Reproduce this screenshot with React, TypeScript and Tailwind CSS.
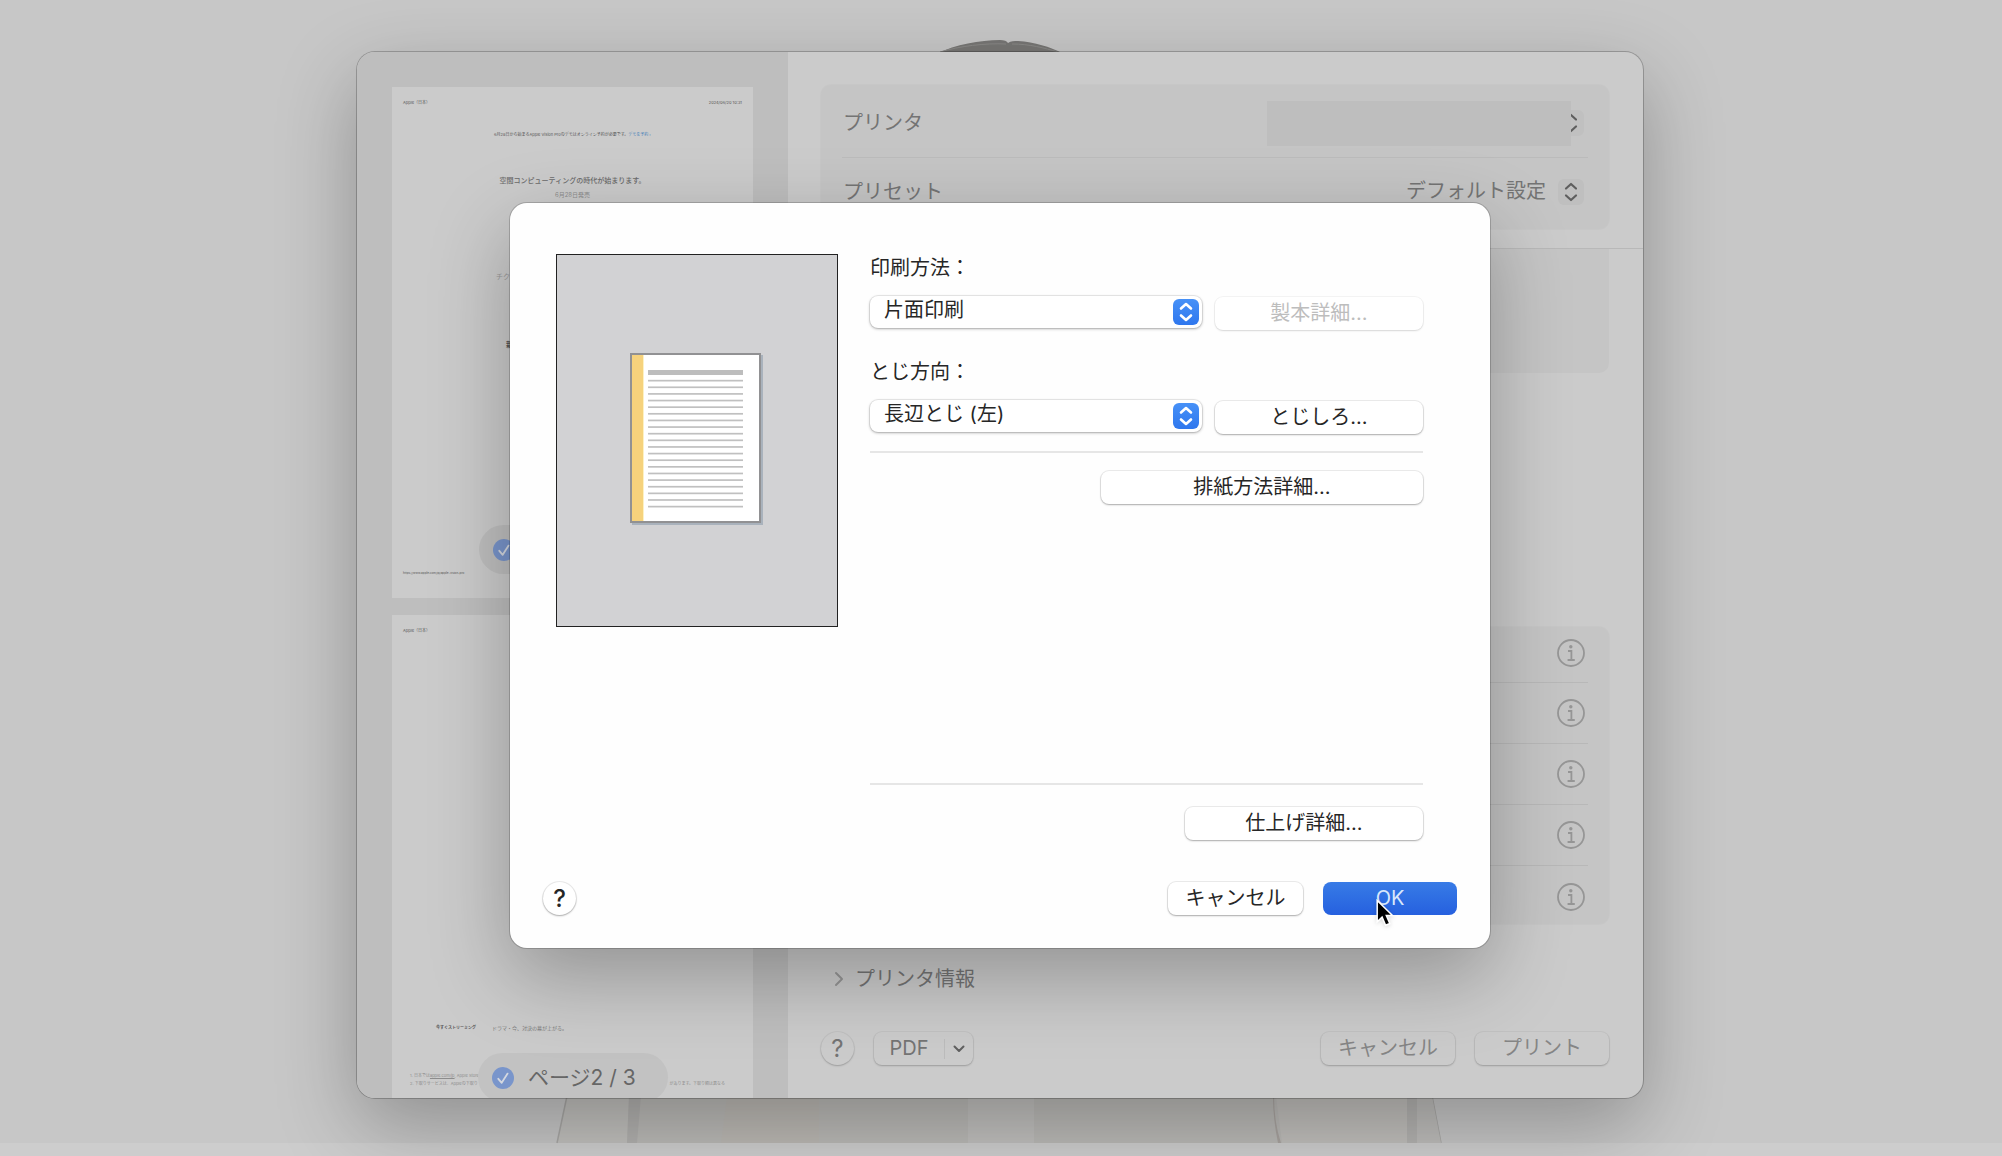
import React, { useState } from 'react';

const lineRows = Array.from({ length: 20 }, (_, i) => i);
const optionRows = ['メディアと品質', 'レイアウト', '用紙処理', '透かし', 'プリンタ機能'];

const UpDown: React.FC<{ className?: string; width?: number }> = ({ className, width = 3 }) => (
  <svg viewBox="0 0 26 26" className={className} fill="none" stroke="currentColor" strokeWidth={width} strokeLinecap="round" strokeLinejoin="round" aria-hidden="true">
    <path d="M8 9.5L13 5l5 4.5M8 16.5l5 4.5 5-4.5" />
  </svg>
);

const CheckBadge: React.FC = () => (
  <svg viewBox="0 0 22 22" className="size-[22px] shrink-0" fill="none" aria-hidden="true">
    <circle cx="11" cy="11" r="11" fill="#7995cb" />
    <path d="M6.3 11.8l3.4 4L15.6 6.6" stroke="#d4d8e0" strokeWidth="1.8" strokeLinecap="round" strokeLinejoin="round" />
  </svg>
);

const InfoIcon: React.FC = () => (
  <svg viewBox="0 0 28 28" className="size-7" fill="none" stroke="#969696" aria-hidden="true">
    <circle cx="14" cy="14" r="13" strokeWidth="1.8" />
    <circle cx="13.8" cy="7.7" r="1.7" fill="#969696" stroke="none" />
    <path d="M11 12h3.4v9M10.6 21h7.2" strokeWidth="1.8" />
  </svg>
);

const PushButton: React.FC<React.ButtonHTMLAttributes<HTMLButtonElement>> = ({ className = '', ...rest }) => (
  <button
    type="button"
    className={`flex h-[33px] items-center justify-center rounded-lg bg-white pb-0.5 text-[20px] leading-7 text-[#262626] shadow-[0_0_0_1px_rgba(0,0,0,0.07),0_1px_2px_rgba(0,0,0,0.28)] disabled:text-[#bdbdbd] disabled:shadow-[0_0_0_1px_rgba(0,0,0,0.04),0_1px_2px_rgba(0,0,0,0.12)] ${className}`}
    {...rest}
  />
);

const DimButton: React.FC<React.ButtonHTMLAttributes<HTMLButtonElement>> = ({ className = '', ...rest }) => (
  <button
    type="button"
    className={`flex h-[33px] items-center justify-center rounded-lg pb-0.5 text-[20px] leading-7 shadow-[0_0_0_1px_rgba(0,0,0,0.04),0_1px_2px_rgba(0,0,0,0.2)] ${className}`}
    {...rest}
  />
);

interface PopupProps {
  id: string;
  label: string;
  options: string[];
  value: string;
  onChange: (v: string) => void;
  children: React.ReactNode;
}

const PopupField: React.FC<PopupProps> = ({ id, label, options, value, onChange, children }) => (
  <div className="flex flex-col gap-3.5">
    <label htmlFor={id} className="text-[20px] leading-7">{label}</label>
    <div className="flex h-[34px] items-start gap-[13px]">
      <div className="relative flex-1">
        <select
          id={id}
          value={value}
          onChange={(e) => onChange(e.target.value)}
          className="block h-8 w-full appearance-none rounded-lg bg-white pr-10 pb-1 pl-3.5 text-[20px] leading-7 shadow-[0_0_0_1px_rgba(0,0,0,0.07),0_1px_3px_rgba(0,0,0,0.3)] focus:outline-none"
        >
          {options.map((o) => (
            <option key={o}>{o}</option>
          ))}
        </select>
        <span className="pointer-events-none absolute top-[3px] right-[3px] rounded-md bg-gradient-to-b from-[#4791f7] to-[#2f77ee] text-white">
          <UpDown className="size-[26px]" width={2.6} />
        </span>
      </div>
      {children}
    </div>
  </div>
);

// 背景のページ写真
const Backdrop: React.FC = () => (
  <svg viewBox="0 0 2002 1156" preserveAspectRatio="xMidYMin slice" className="absolute inset-0 h-full w-full" aria-hidden="true">
    <path d="M938 53C955 45 980 40 1000 40c4 0 7 1 8 3 3-2 6-2 10-2 17 1 32 6 44 12z" fill="#777674" />
    <path d="M940 52C960 46 985 43 1006 44M1012 44c18 0 32 4 46 8" stroke="#8a8987" fill="none" />
    <path d="M567 1096h864l10 47H557z" fill="#bcbbb8" />
    <path d="M567 1096h62l-2 47h-70z" fill="#c2c1be" />
    <path d="M567 1096l-10 47M1432 1096l9 47" stroke="#a9a8a6" strokeWidth="1.5" fill="none" />
    <path d="M629 1096h12l-4 47h-10z" fill="#b3b2b0" />
    <path d="M727 1096h92v47h-98z" fill="#bdbab5" />
    <path d="M968 1096h66v47h-66z" fill="#c2c1bf" />
    <path d="M1274 1096q0 26 7 47h-3q-5-24-5-47z" fill="#aaa5a1" />
    <path d="M1276 1096h136v47h-130z" fill="#c2c0bd" />
    <path d="M1407 1096h10v47h-10z" fill="#b5b4b2" />
    <path d="M1417 1096h15l9 47h-24z" fill="#bfbebc" />
  </svg>
);

const Sidebar: React.FC = () => (
  <aside className="flex w-[431px] shrink-0 flex-col gap-[17px] bg-[#bebebe] pt-[35px] pr-[35px] pl-[35px]">
    <section className="relative h-[511px] bg-[#cbcbcb] px-[11px] pt-3 text-[#777]">
      <div className="flex justify-between text-[4px] leading-2 text-[#555]">
        <span>Apple（日本）</span>
        <span>2024/06/20 10:31</span>
      </div>
      <p className="mt-6 text-center text-[4px] leading-2 whitespace-nowrap text-[#555]">
        6月28日から始まるApple Vision Proのデモはオンライン予約が必要です。<a href="#demo" className="text-[#3f7cb8]">デモを予約 ›</a>
      </p>
      <h2 className="mt-9 text-center text-[7px] leading-3 font-medium text-[#6a6a6a]">空間コンピューティングの時代が始まります。</h2>
      <p className="mt-0.5 text-center text-[6px] leading-3 text-[#8c8c8c]">6月28日発売</p>
      <p className="mt-[70px] pl-[93px] text-[7px] leading-3 text-[#999]">チクタク</p>
      <p className="mt-14 pl-[103px] text-[7px] leading-3 font-bold text-[#555]">新しい</p>
      <p className="absolute bottom-[21px] left-[11px] text-[3px] leading-2 text-[#555]">https://www.apple.com/jp/apple-vision-pro</p>
      <div className="absolute bottom-6 left-[87px] flex h-[49px] w-[190px] items-center rounded-full bg-[#bfbfbf] pl-3.5">
        <CheckBadge />
      </div>
    </section>
    <section className="relative flex-1 bg-[#cbcbcb] px-[11px] pt-3 text-[#777]">
      <p className="text-[4px] leading-2 text-[#555]">Apple（日本）</p>
      <div className="absolute right-0 bottom-[66px] left-11 flex gap-3 text-[5px] leading-2 whitespace-nowrap">
        <strong className="w-11 text-[4px] text-[#555]">今すぐストリーミング</strong>
        <span>ドラマ・今、対決の幕が上がる。</span>
      </div>
      <ol className="absolute right-7 bottom-2.5 left-[18px] text-[4px] leading-2 whitespace-nowrap text-[#8c8c8c]">
        <li>1. 日本では<u>apple.com/jp</u>, Apple Store</li>
        <li className="flex justify-between">
          <span>2. 下取りサービスは、Appleの下取り</span>
          <span>があります。下取り額は異なる</span>
        </li>
      </ol>
      <label className="absolute -bottom-1 left-[86px] flex h-[49px] w-[190px] items-center gap-3.5 rounded-full bg-[#c2c2c2] pl-3.5 text-[21px] leading-7 text-[#666]">
        <input type="checkbox" defaultChecked className="sr-only" />
        <CheckBadge />
        <span>ページ2 / 3</span>
      </label>
    </section>
  </aside>
);

const PrintPane: React.FC = () => (
  <div className="flex min-w-0 flex-1 flex-col pt-[33px] pb-[33px] text-[20px] leading-7 text-[#747474]">
    <div className="mr-[34px] ml-[33px] rounded-[10px] bg-[#c5c5c5] py-1 pr-[21px] pl-[21px] shadow-[0_0_0_1px_rgba(0,0,0,0.015)]">
      <div className="flex h-[69px] items-center justify-between border-b border-[#bbb] pr-1 pl-px">
        <label htmlFor="printer">プリンタ</label>
        <div className="relative flex h-[45px] w-[317px] items-center justify-end text-[#5e5e5e]">
          <select id="printer" className="absolute inset-0 appearance-none opacity-0">
            <option></option>
          </select>
          <UpDown className="size-[26px] rounded-md bg-[#c0c0c0]" width={2.2} />
          <span className="absolute inset-y-0 right-[13px] left-0 bg-[#bebebe]" />
        </div>
      </div>
      <div className="flex h-[67px] items-center justify-between pr-1 pl-px">
        <label htmlFor="preset">プリセット</label>
        <div className="relative flex items-center">
          <select id="preset" className="appearance-none bg-transparent pr-[38px] pb-0.5">
            <option>デフォルト設定</option>
          </select>
          <span className="pointer-events-none absolute right-0 text-[#5e5e5e]">
            <UpDown className="size-[26px] rounded-md bg-[#bfbfbf]" width={2.2} />
          </span>
        </div>
      </div>
    </div>
    <div className="mt-[19px] border-t border-[#b8b8b8] pr-[34px] pl-[33px]">
      <div className="h-[124px] rounded-b-[10px] bg-[#c5c5c5]" />
    </div>
    <ul className="mt-[254px] mr-[34px] ml-[33px] rounded-[10px] bg-[#c5c5c5] pr-[21px] pl-[21px] shadow-[0_0_0_1px_rgba(0,0,0,0.015)]">
      {optionRows.map((name) => (
        <li key={name} className="flex h-[61px] items-center justify-end border-b border-[#b8b8b8] pr-[3px] first:h-14 first:pb-1 last:h-[58px] last:border-b-0 last:pt-1">
          <button type="button" aria-label={name}>
            <InfoIcon />
          </button>
        </li>
      ))}
    </ul>
    <button type="button" className="mt-[39px] ml-[46px] flex h-8 items-center gap-[11px] self-start">
      <svg viewBox="0 0 10 16" className="h-4 w-2.5" fill="none" stroke="#969696" strokeWidth="2" strokeLinecap="round" strokeLinejoin="round" aria-hidden="true">
        <path d="M2 2l6 6-6 6" />
      </svg>
      プリンタ情報
    </button>
    <footer className="mt-[37px] mr-[34px] ml-[33px] flex items-center gap-5">
      <DimButton className="w-[33px] rounded-full! pb-0! text-[24px]!">?</DimButton>
      <DimButton className="w-[99px]">
        <span className="flex-1 text-center">PDF</span>
        <span className="mt-0.5 flex h-5 w-[29px] items-center justify-center border-l border-[#bcbcbc]">
          <svg viewBox="0 0 12 8" className="h-2 w-3" fill="none" stroke="#606060" strokeWidth="2" strokeLinecap="round" strokeLinejoin="round" aria-hidden="true">
            <path d="M1.5 1.5L6 6l4.5-4.5" />
          </svg>
        </span>
      </DimButton>
      <DimButton className="ml-auto w-[134px] text-[#858585]">キャンセル</DimButton>
      <DimButton className="w-[134px] text-[#858585]">プリント</DimButton>
    </footer>
  </div>
);

const PagePreview: React.FC = () => (
  <div className="flex h-[373px] w-[282px] shrink-0 items-center justify-center border border-[#222] bg-[#d2d2d4]">
    <svg viewBox="0 0 134 173" className="mb-0.5 h-[173px] w-[134px]" aria-hidden="true">
      <rect x="2" y="2" width="131" height="170" fill="#a9b2bc" />
      <rect x="1" y="1" width="129" height="168" fill="#fff" stroke="#919193" strokeWidth="2" />
      <rect x="2" y="2" width="11" height="166" fill="#f6d27c" />
      <rect x="13" y="2" width="1" height="166" fill="#fdf2c4" />
      <rect x="18" y="17" width="95" height="5" fill="#bdbdbd" />
      {lineRows.map((i) => (
        <rect key={i} x="18" y={26.8 + i * 6.63} width="95" height="1.7" fill="#c0c0c0" />
      ))}
    </svg>
  </div>
);

const LayoutDialog: React.FC = () => {
  const [method, setMethod] = useState('片面印刷');
  const [binding, setBinding] = useState('長辺とじ (左)');

  return (
    <div
      role="dialog"
      aria-label="ページ設定"
      className="flex w-full max-w-[980px] flex-col gap-[42px] self-start rounded-[17px] bg-[#fefefe] pt-[51px] pb-[33px] text-[#262626] shadow-[0_0_0_1px_rgba(0,0,0,0.18),0_28px_80px_rgba(0,0,0,0.28)]"
    >
      <div className="flex items-start gap-8 pr-[67px] pl-[46px]">
        <PagePreview />
        <div className="flex min-w-0 flex-1 flex-col">
          <PopupField id="method" label="印刷方法：" options={['片面印刷', '両面印刷', '製本印刷']} value={method} onChange={setMethod}>
            <PushButton disabled={method !== '製本印刷'} className="w-52 self-end">製本詳細...</PushButton>
          </PopupField>
          <div className="mt-7">
            <PopupField id="binding" label="とじ方向：" options={['長辺とじ (左)', '長辺とじ (右)', '短辺とじ (上)']} value={binding} onChange={setBinding}>
              <PushButton className="w-52 self-end">とじしろ...</PushButton>
            </PopupField>
          </div>
          <hr className="mt-[17px] border-t-2 border-[#e6e6e6]" />
          <PushButton className="mt-[18px] w-[322px] self-end">排紙方法詳細...</PushButton>
          <hr className="mt-[279px] border-t-2 border-[#e6e6e6]" />
          <PushButton className="mt-[22px] w-[238px] self-end">仕上げ詳細...</PushButton>
        </div>
      </div>
      <div className="flex items-center gap-5 px-[33px]">
        <PushButton className="mr-auto w-[33px] rounded-full! pb-0! text-[24px]! font-medium">?</PushButton>
        <PushButton className="w-[135px]">キャンセル</PushButton>
        <div className="relative">
          <button type="button" className="flex h-[33px] w-[134px] items-center justify-center rounded-lg bg-gradient-to-b from-[#387be6] to-[#2660df] pb-0.5 text-[20px] leading-7 text-[#d9e8fb]">
            OK
          </button>
          <svg viewBox="0 0 20 30" className="pointer-events-none absolute top-[17px] left-[53px] h-[30px] w-5 drop-shadow-sm" aria-hidden="true">
            <path d="M1.2 1.5v21.2l4.9-4.6 3.5 8.2 4.2-1.8-3.5-8h6.2z" fill="#000" stroke="#fff" strokeWidth="1.5" />
          </svg>
        </div>
      </div>
    </div>
  );
};

const App: React.FC = () => {
  return (
    <div lang="ja" className="relative flex min-h-screen flex-col overflow-hidden bg-[#c7c7c7] font-['Inter','Noto_Sans_CJK_JP',sans-serif]">
      <Backdrop />
      <main className="relative flex flex-1 justify-center pt-[52px] pr-0.5 pb-[45px]">
        <div className="flex w-full max-w-[1286px] overflow-hidden rounded-[18px] bg-[#cbcbcb] shadow-[0_0_0_1px_rgba(0,0,0,0.22),0_28px_80px_rgba(0,0,0,0.28)]">
          <Sidebar />
          <PrintPane />
        </div>
        <div className="absolute inset-0 flex justify-center pt-[203px] pr-0.5">
          <LayoutDialog />
        </div>
      </main>
      <div className="relative h-[13px] bg-white/10" />
    </div>
  );
};

export default App;
